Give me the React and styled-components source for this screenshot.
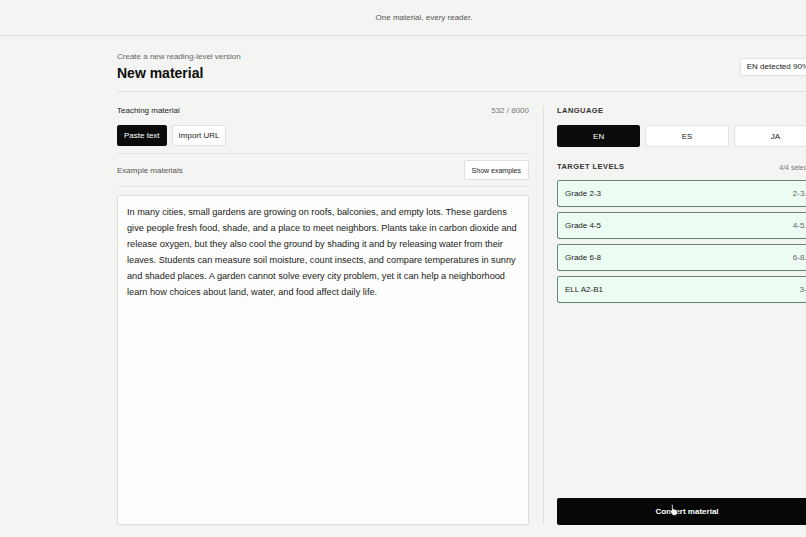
import React, { useState } from 'react';
import styled, { createGlobalStyle } from 'styled-components';

const GlobalStyle = createGlobalStyle`
  html, body {
    margin: 0;
    padding: 0;
    overflow: hidden;
    background: #f4f4f2;
  }
  * {
    box-sizing: border-box;
  }
`;

const sample = 'In many cities, small gardens are growing on roofs, balconies, and empty lots. These gardens give people fresh food, shade, and a place to meet neighbors. Plants take in carbon dioxide and release oxygen, but they also cool the ground by shading it and by releasing water from their leaves. Students can measure soil moisture, count insects, and compare temperatures in sunny and shaded places. A garden cannot solve every city problem, yet it can help a neighborhood learn how choices about land, water, and food affect daily life.';

const levels = [
  { name: 'Grade 2-3', range: '2-3.5' },
  { name: 'Grade 4-5', range: '4-5.5' },
  { name: 'Grade 6-8', range: '6-8.5' },
  { name: 'ELL A2-B1', range: '3-4' },
];

export default function App() {
  const [mode, setMode] = useState('paste');
  const [lang, setLang] = useState('EN');
  const [text, setText] = useState(sample);

  return (
    <Shell>
      <GlobalStyle />
      <TopBar>One material, every reader.</TopBar>
      <Main>
        <TitleRow>
          <div>
            <Eyebrow>Create a new reading-level version</Eyebrow>
            <Title>New material</Title>
          </div>
          <Badge>EN detected 90%</Badge>
        </TitleRow>

        <Columns>
          <LeftCol>
            <LabelRow>
              <span>Teaching material</span>
              <Counter>532 / 8000</Counter>
            </LabelRow>
            <Tabs>
              <SmallButton $active={mode === 'paste'} onClick={() => setMode('paste')}>
                Paste text
              </SmallButton>
              <SmallButton $active={mode === 'url'} onClick={() => setMode('url')}>
                Import URL
              </SmallButton>
            </Tabs>
            <ExampleRow>
              <span>Example materials</span>
              <GhostButton>Show examples</GhostButton>
            </ExampleRow>
            <TextBox value={text} onChange={(e) => setText(e.target.value)} />
          </LeftCol>

          <RightCol>
            <SectionLabel>Language</SectionLabel>
            <LangGrid>
              {['EN', 'ES', 'JA'].map((l) => (
                <LangButton key={l} $active={lang === l} onClick={() => setLang(l)}>
                  {l}
                </LangButton>
              ))}
            </LangGrid>
            <LevelsHead>
              <SectionLabel>Target levels</SectionLabel>
              <Selected>4/4 selected</Selected>
            </LevelsHead>
            <LevelList>
              {levels.map((lv) => (
                <LevelCard key={lv.name}>
                  <span>{lv.name}</span>
                  <LevelRange>{lv.range}</LevelRange>
                </LevelCard>
              ))}
            </LevelList>
            <Spacer />
            <ConvertButton>
              Convert material
              <Cursor width="10" height="13" viewBox="0 0 10 13">
                <path
                  d="M3 1.2c.6 0 1 .4 1 1V6l.3-.1c.5-.2 1 0 1.2.4.5-.2 1 0 1.2.4.5-.2 1.1.1 1.2.6L8.6 9.5c0 1.6-1.1 2.9-2.7 2.9H5c-1 0-1.8-.5-2.3-1.3L1.1 8.4c-.3-.5-.1-1 .4-1.2.4-.2.8 0 1 .3V2.2c0-.6.4-1 .5-1z"
                  fill="#fff"
                  stroke="#000"
                  strokeWidth="0.7"
                />
              </Cursor>
            </ConvertButton>
          </RightCol>
        </Columns>
      </Main>
    </Shell>
  );
}

const Shell = styled.div`
  width: 848px;
  height: 100vh;
  display: flex;
  flex-direction: column;
  font-family: 'Liberation Sans', Arial, sans-serif;
  color: #111;
  background: #f4f4f2;
`;

const TopBar = styled.header`
  height: 36px;
  flex-shrink: 0;
  display: flex;
  align-items: center;
  justify-content: center;
  font-size: 8px;
  color: #555;
  border-bottom: 1px solid #dcdcda;
`;

const Main = styled.main`
  width: 700px;
  margin-left: 117px;
  flex: 1;
  display: flex;
  flex-direction: column;
  min-height: 0;
`;

const TitleRow = styled.div`
  display: flex;
  align-items: center;
  justify-content: space-between;
  padding: 16px 0 9px;
  border-bottom: 1px solid #e2e2e0;
`;

const Eyebrow = styled.div`
  font-size: 8px;
  line-height: 10px;
  color: #666;
`;

const Title = styled.h1`
  margin: 2px 0 0;
  font-size: 14px;
  line-height: 18px;
  font-weight: 700;
  color: #0d0d0d;
`;

const Badge = styled.div`
  font-size: 8px;
  line-height: 10px;
  padding: 3px 6px;
  margin-right: 1px;
  background: #fff;
  border: 1px solid #e2e2e0;
  border-radius: 2px;
  color: #222;
`;

const Columns = styled.div`
  flex: 1;
  min-height: 0;
  display: grid;
  grid-template-columns: 412px 1fr;
  column-gap: 14px;
  padding: 14px 0 12px;
`;

const LeftCol = styled.section`
  display: flex;
  flex-direction: column;
  min-height: 0;
`;

const LabelRow = styled.div`
  display: flex;
  justify-content: space-between;
  align-items: center;
  font-size: 8px;
  line-height: 10px;
  color: #222;
`;

const Counter = styled.span`
  color: #777;
`;

const Tabs = styled.div`
  display: flex;
  gap: 5px;
  margin-top: 9px;
  padding-bottom: 7px;
  border-bottom: 1px solid #e4e4e2;
`;

const SmallButton = styled.button`
  height: 21px;
  padding: 0 6px;
  font-family: inherit;
  font-size: 8px;
  border-radius: 2px;
  cursor: pointer;
  border: 1px solid ${({ $active }) => ($active ? '#0b0b0b' : '#e0e0de')};
  background: ${({ $active }) => ($active ? '#0b0b0b' : '#fff')};
  color: ${({ $active }) => ($active ? '#fff' : '#222')};
`;

const ExampleRow = styled.div`
  display: flex;
  justify-content: space-between;
  align-items: center;
  padding: 6px 0;
  font-size: 8px;
  color: #555;
  border-bottom: 1px solid #e4e4e2;
`;

const GhostButton = styled.button`
  height: 20px;
  padding: 0 7px;
  font-family: inherit;
  font-size: 7px;
  color: #222;
  background: #fff;
  border: 1px solid #e0e0de;
  border-radius: 2px;
  cursor: pointer;
`;

const TextBox = styled.textarea`
  flex: 1;
  margin-top: 8px;
  resize: none;
  padding: 8px 11px 8px 9px;
  font-family: 'Liberation Sans', Arial, sans-serif;
  font-size: 9.2px;
  line-height: 16px;
  color: #1a1a1a;
  background: #fdfdfc;
  border: 1px solid #dedede;
  border-radius: 2px;
  box-shadow: 0 1px 1px rgba(0, 0, 0, 0.04);
  outline: none;
`;

const RightCol = styled.aside`
  display: flex;
  flex-direction: column;
  border-left: 1px solid #e0e0de;
  padding-left: 13px;
  min-height: 0;
`;

const SectionLabel = styled.div`
  font-size: 7.5px;
  line-height: 10px;
  font-weight: 700;
  letter-spacing: 0.06em;
  text-transform: uppercase;
  color: #333;
`;

const LangGrid = styled.div`
  display: grid;
  grid-template-columns: repeat(3, 1fr);
  gap: 5px;
  margin-top: 9px;
`;

const LangButton = styled.button`
  height: 22px;
  font-family: inherit;
  font-size: 8px;
  border-radius: 2px;
  cursor: pointer;
  border: 1px solid ${({ $active }) => ($active ? '#0b0b0b' : '#e2e2e0')};
  background: ${({ $active }) => ($active ? '#0b0b0b' : '#fff')};
  color: ${({ $active }) => ($active ? '#fff' : '#222')};
`;

const LevelsHead = styled.div`
  display: flex;
  justify-content: space-between;
  align-items: center;
  margin-top: 15px;
`;

const Selected = styled.span`
  font-size: 7px;
  color: #777;
`;

const LevelList = styled.div`
  display: flex;
  flex-direction: column;
  gap: 5px;
  margin-top: 8px;
`;

const LevelCard = styled.div`
  height: 27px;
  display: flex;
  align-items: center;
  justify-content: space-between;
  padding: 0 5px 0 7px;
  font-size: 8px;
  color: #222;
  background: #edfcf3;
  border: 1px solid #668577;
  border-radius: 2px;
`;

const LevelRange = styled.span`
  color: #666;
`;

const Spacer = styled.div`
  flex: 1;
`;

const ConvertButton = styled.button`
  position: relative;
  height: 27px;
  font-family: inherit;
  font-size: 8px;
  font-weight: 700;
  color: #fff;
  background: #070707;
  border: none;
  border-radius: 2px;
  cursor: pointer;
`;

const Cursor = styled.svg`
  position: absolute;
  left: 112px;
  top: 5px;
`;
